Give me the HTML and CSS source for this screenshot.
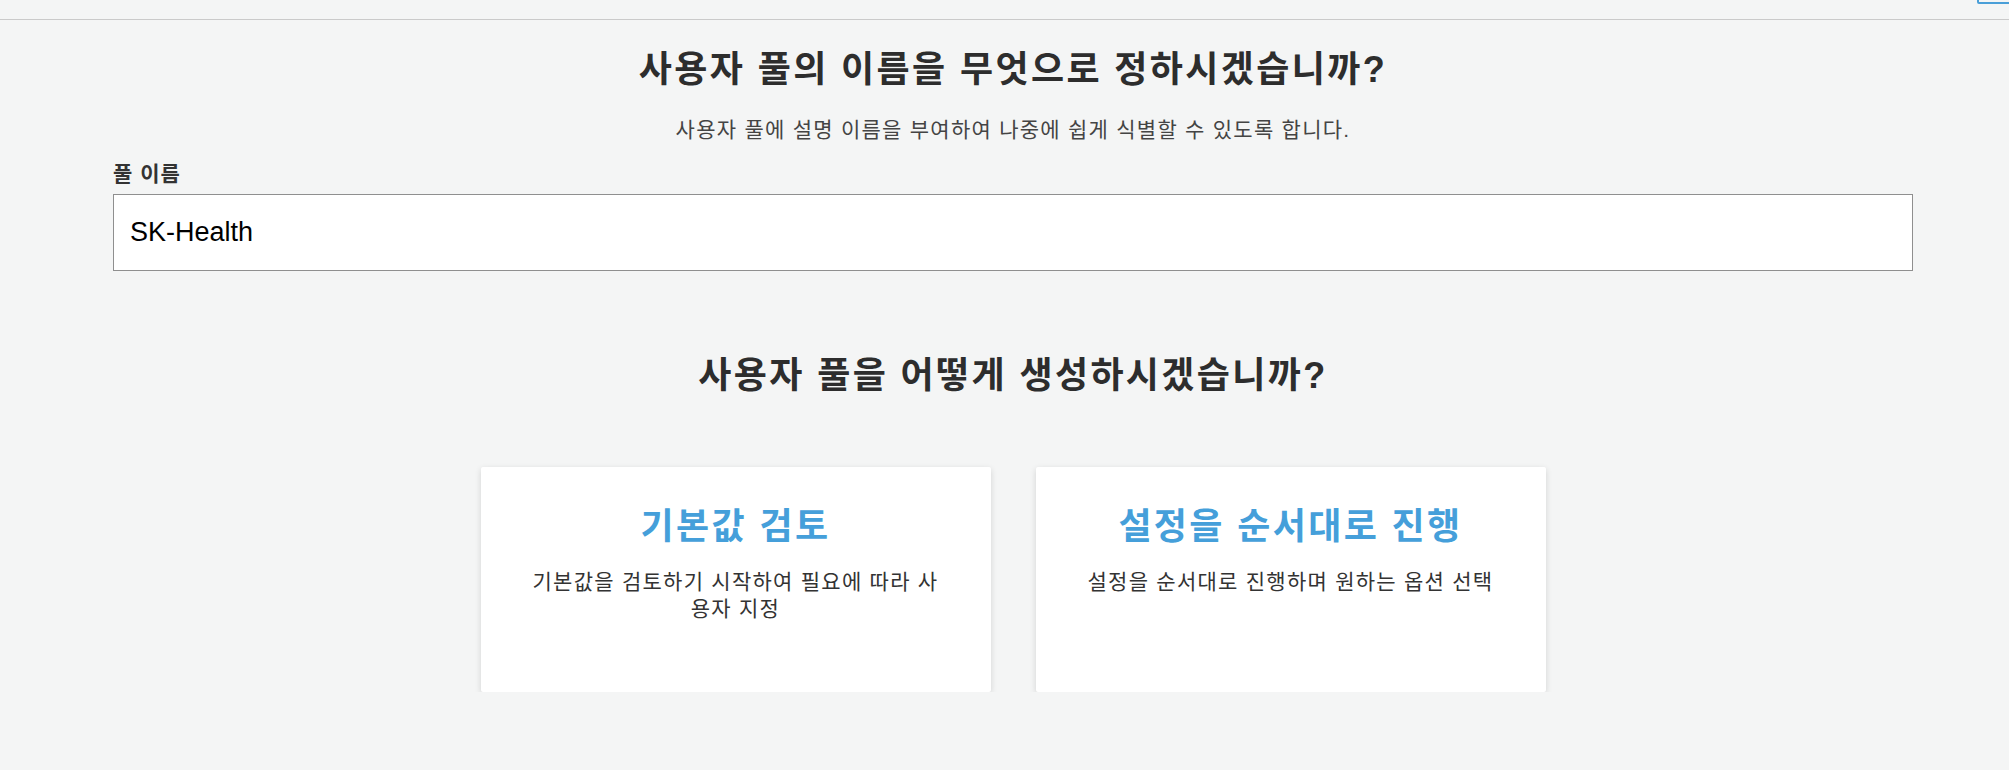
FILE: index.html
```html
<!DOCTYPE html>
<html lang="ko">
<head>
<meta charset="utf-8">
<title>사용자 풀 생성</title>
<link rel="stylesheet" href="styles.css">
</head>
<body>
  <header class="topbar">
    <span class="topbar-btn"></span>
  </header>
  <main class="main">
    <h1 class="title">사용자 풀의 이름을 무엇으로 정하시겠습니까?</h1>
    <p class="subtitle">사용자 풀에 설명 이름을 부여하여 나중에 쉽게 식별할 수 있도록 합니다.</p>
    <label class="field-label" for="poolname">풀 이름</label>
    <input class="field-input" id="poolname" type="text" value="SK-Health">
    <h2 class="title title-2">사용자 풀을 어떻게 생성하시겠습니까?</h2>
    <div class="cards">
      <div class="card">
        <div class="card-title">기본값 검토</div>
        <div class="card-desc">기본값을 검토하기 시작하여 필요에 따라 사용자 지정</div>
      </div>
      <div class="card">
        <div class="card-title">설정을 순서대로 진행</div>
        <div class="card-desc">설정을 순서대로 진행하며 원하는 옵션 선택</div>
      </div>
    </div>
  </main>
</body>
</html>
```

FILE: styles.css
```css
* { box-sizing: border-box; }

body {
  margin: 0;
  background: #f4f5f5;
  font-family: "Liberation Sans", "Noto Sans CJK KR", sans-serif;
  color: #333;
}

.topbar {
  height: 20px;
  border-bottom: 1px solid #cacaca;
  display: flex;
  justify-content: flex-end;
  overflow: hidden;
}

.topbar-btn {
  width: 42px;
  height: 40px;
  margin-top: -36px;
  margin-right: -10px;
  border: 2px solid #4a9fd8;
  border-radius: 2px;
  flex: none;
}

.main {
  width: 1800px;
  margin-left: 113px;
  display: flex;
  flex-direction: column;
}

.title {
  margin: 32px 0 0;
  font-size: 36px;
  line-height: 36px;
  font-weight: 700;
  letter-spacing: 0.066em;
  text-align: center;
  color: #2d2d2d;
}

.subtitle {
  margin: 31px 0 0;
  font-size: 21px;
  line-height: 21px;
  letter-spacing: 0.06em;
  text-align: center;
  color: #444;
}

.field-label {
  margin-top: 23px;
  font-size: 21px;
  line-height: 21px;
  font-weight: 700;
  letter-spacing: 0.05em;
  color: #333;
}

.field-input {
  margin-top: 10px;
  width: 100%;
  height: 77px;
  border: 1px solid #8f8f8f;
  background: #fff;
  padding: 0 16px;
  font-family: "Liberation Sans", "Noto Sans CJK KR", sans-serif;
  font-size: 27px;
  color: #000;
  outline: none;
}

.title-2 {
  margin-top: 87px;
}

.cards {
  margin-top: 73px;
  display: flex;
  justify-content: center;
  gap: 45px;
}

.card {
  width: 510px;
  height: 225px;
  background: #fff;
  border-radius: 2px;
  box-shadow: 0 2px 6px rgba(0, 0, 0, 0.14);
  padding: 42px 46px 0;
  text-align: center;
}

.card-title {
  font-size: 36px;
  line-height: 36px;
  font-weight: 700;
  letter-spacing: 0.066em;
  color: #459fda;
}

.card-desc {
  margin-top: 23px;
  font-size: 21px;
  line-height: 27px;
  letter-spacing: 0.06em;
  color: #333;
}
```
